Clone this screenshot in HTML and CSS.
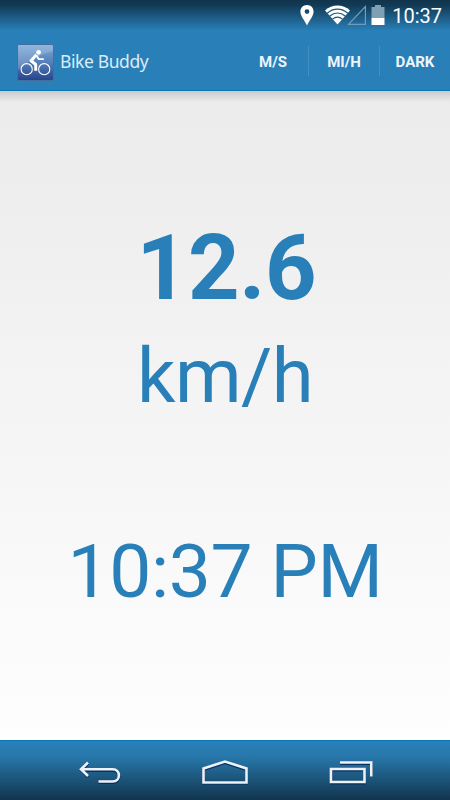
FILE: index.html
```
<!DOCTYPE html>
<html lang="en">
<head>
  <meta charset="UTF-8" />
  <title>Bike Buddy</title>
  <link rel="stylesheet" href="styles.css">
</head>
<body>
  <header class="top">
    <div class="status-bar">
      <svg class="pin" width="14" height="21" viewBox="0 0 14 21"><path fill="#fff" fill-rule="evenodd" d="M7 0C3.200 0 .4 2.800.4 6.500.4 11 4.500 15 7 20.600 9.500 15 13.600 11 13.600 6.500 13.600 2.800 10.800 0 7 0ZM7 4.200a2.400 2.400 0 1 0 0 4.800a2.400 2.400 0 1 0 0-4.800Z"/></svg>
      <svg class="wifi" width="25" height="20" viewBox="0 0 25 20">
        <path fill="#fff" d="M0 5.500C7-1.300 18-1.300 25 5.500L12.500 19.500Z"/>
        <path fill="none" stroke="#1c567f" stroke-width="1.200" d="M2.200 8.200C8.300 2.700 16.700 2.700 22.800 8.200M4.800 11C9.500 7 15.500 7 20.200 11M7.500 14.100C10.500 11.600 14.500 11.600 17.500 14.100"/>
      </svg>
      <svg class="signal" width="20" height="21" viewBox="0 0 20 21"><path fill="none" stroke="#6f9dbd" stroke-width="1.200" d="M1.500 19.400L18.400 1.500V19.400Z"/></svg>
      <svg class="battery" width="14" height="21" viewBox="0 0 14 21"><path fill="#7f9fb3" d="M4 0H10V2H13.500V13H.5V2H4Z"/><path fill="#fff" d="M.5 13H13.500V20H.5Z"/></svg>
      <span class="time">10:37</span>
    </div>
    <div class="action-bar">
      <svg class="logo" width="37" height="37" viewBox="0 0 37 37">
        <defs>
          <linearGradient id="tile" x1="0" y1="0" x2="0" y2="1">
            <stop offset="0" stop-color="#7daad8"/>
            <stop offset=".5" stop-color="#557fb9"/>
            <stop offset="1" stop-color="#25438a"/>
          </linearGradient>
        </defs>
        <rect x=".5" y=".5" width="36" height="36" rx="2" fill="url(#tile)" stroke="#466d9f"/>
        <path fill="#fff" opacity=".17" d="M1 1H36V7Q16 12 1 26Z"/>
        <g fill="none" stroke="#fff">
          <circle cx="9.700" cy="25.200" r="5.600" stroke-width="1.100"/>
          <circle cx="27.200" cy="25.200" r="5.600" stroke-width="1.100"/>
          <path stroke-width="3" stroke-linejoin="round" d="M19.500 10.800L14 16.800L18.700 20.500V26.800"/>
          <path stroke-width="1.800" stroke-linejoin="round" d="M19.300 11.200L21.800 15.200H26.800"/>
        </g>
        <circle cx="21.600" cy="8.300" r="2.400" fill="#fff"/>
      </svg>
      <h1 class="title">Bike Buddy</h1>
      <nav class="actions">
        <a class="action ms">M/S</a>
        <a class="action mih">MI/H</a>
        <a class="action dark">DARK</a>
      </nav>
    </div>
  </header>

  <main class="content">
    <div class="speed">12.6</div>
    <div class="unit">km/h</div>
    <div class="clock">10:37 PM</div>
  </main>

  <footer class="nav-bar">
    <svg width="44" height="26" viewBox="0 0 44 26">
      <g class="shade"><path d="M3 10.500H33.500C42 10.500 42 22.500 33.500 22.500H19.500M9 3.500L2.500 10.200L9 17"/></g>
      <g class="line"><path d="M2.500 9.300H33.500C42 9.300 42 21.500 33.500 21.500H19.500M9 2.500L2 9.300L9 16"/></g>
    </svg>
    <svg class="home" width="48" height="26" viewBox="0 0 48 26">
      <g class="shade"><path d="M2.500 9.500L24 2.500L45.500 9.500V23H2.500Z"/></g>
      <g class="line"><path d="M2.500 8.500L24 1.500L45.500 8.500V22.500H2.500Z"/></g>
    </svg>
    <svg width="44" height="26" viewBox="0 0 44 26">
      <g class="shade"><path d="M2.500 10V23H35.500V10ZM11 3.500H42.500V16.500"/></g>
      <g class="line"><path d="M2 9H35.500V22H2ZM11 2.500H42.300V16.500"/></g>
    </svg>
  </footer>
</body>
</html>
```
FILE: styles.css
```
* { box-sizing: border-box; }
body { margin: 0; width: 450px; height: 800px; display: flex; flex-direction: column; overflow: hidden; font-family: Roboto, sans-serif; }

.top { height: 91px; background: linear-gradient(#10344c 0, #123a55 5px, #2980b9 31px); border-bottom: 1px solid #0b78b9; color: #fff; }
.status-bar { height: 32px; padding: 5px 8px 0 0; display: flex; justify-content: flex-end; align-items: flex-start; }
.wifi { margin-left: 11px; }
.signal { margin-left: -3px; }
.battery { margin-left: 4px; }
.time { margin-left: 7px; font-size: 20px; line-height: 23px; }

.action-bar { height: 58px; padding-left: 17px; display: flex; align-items: center; }
.logo { margin-top: 2px; }
.title { margin: 0 0 0 6px; font-family: "Noto Sans", sans-serif; font-size: 17.5px; letter-spacing: -.4px; font-weight: 400; color: #dcebf5; }
.actions { margin-left: auto; display: flex; font-size: 15px; font-weight: 700; color: #edf5fa; }
.action { height: 30px; line-height: 32px; text-align: center; }
.ms { width: 70px; }
.mih { width: 72px; border-left: 1px solid #4490c2; border-right: 1px solid #4490c2; }
.dark { width: 70px; }

.content { flex: 1; background: linear-gradient(rgba(0,0,0,.14), rgba(0,0,0,0) 11px), linear-gradient(#ebebeb, #fefefe); color: #2980b9; text-align: center; padding-top: 125px; }
.speed { padding-left: 3px; font-size: 90px; font-weight: 700; line-height: 106px; letter-spacing: -.3px; }
.unit { font-size: 76px; line-height: 90px; margin-top: 9px; letter-spacing: -.6px; }
.clock { font-size: 75px; line-height: 88px; margin-top: 106px; letter-spacing: -.4px; }

.nav-bar { height: 60px; padding: 19px 77px 0 79px; display: flex; justify-content: space-between; align-items: flex-start; background: linear-gradient(#2980b9 0, #2878ac 15px, #12364f 58px); border-top: 1px solid #0b78b9; }
.home { margin-right: 2px; }
.shade { fill: none; stroke: #092f61; stroke-width: 3; }
.line { fill: none; stroke: #edf2f7; stroke-width: 2.6; }
```
